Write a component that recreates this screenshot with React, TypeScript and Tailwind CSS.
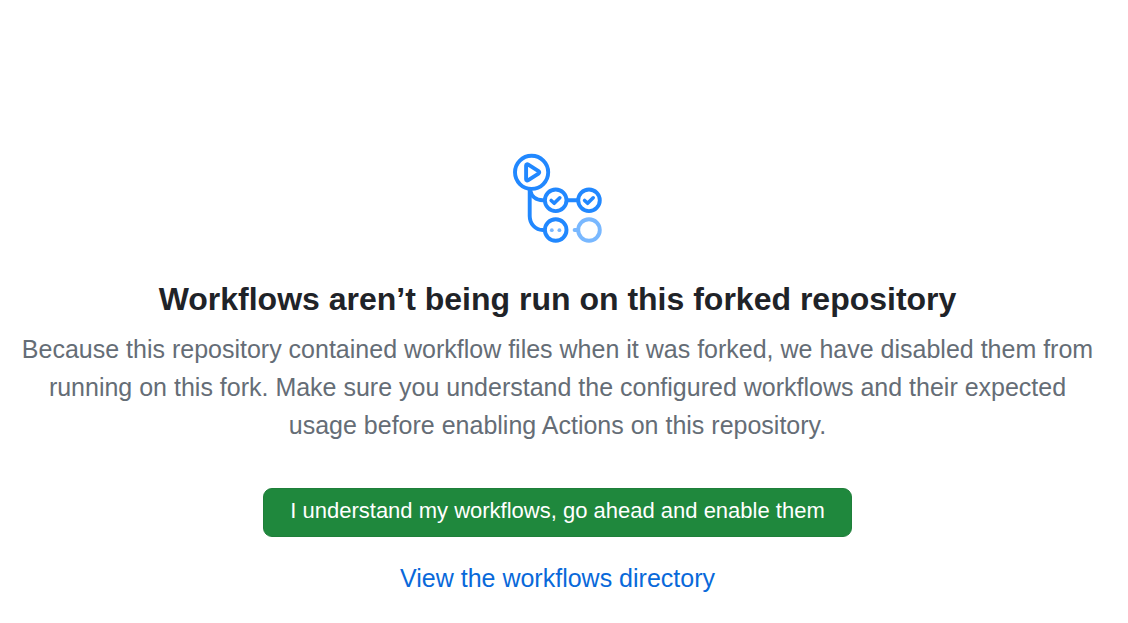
function WorkflowIcon() {
  return (
    <svg
      className="size-[92px]"
      viewBox="0 0 92 92"
      fill="none"
      stroke="#2188ff"
      strokeWidth="3.9"
      strokeLinecap="round"
      strokeLinejoin="round"
      aria-hidden="true"
    >
      <circle cx="19.6" cy="19.3" r="16.6" />
      <path d="M14.1 12.4v13.8c0 1.4 1.2 1.6 2.2 1l10.2-6.6c1-.7 1-1.8 0-2.5l-10.2-6.5c-1-.6-2.2-.4-2.2.8Z" />
      <path d="M17.7 37v26c0 8 6 14 13 14" />
      <path d="M18.2 37.5c1.2 5.8 5.8 9.8 12.5 9.8" />
      <path d="M56 47.3h9" />
      <circle cx="43.7" cy="47.3" r="10.8" />
      <circle cx="77" cy="47.3" r="10.8" />
      <circle cx="43.7" cy="77" r="10.8" />
      <path
        strokeWidth="3.6"
        d="m39.2 47.5 3 2.8 5.6-5.5M72.6 47.5l3 2.8 5.6-5.5"
      />
      <g stroke="#79b8ff">
        <circle cx="77" cy="77" r="10.8" />
        <path d="M62.6 77h2.4" />
      </g>
      <g fill="#79b8ff" stroke="none">
        <circle cx="39.8" cy="77.2" r="1.9" />
        <circle cx="47.4" cy="77.2" r="1.9" />
      </g>
    </svg>
  );
}

export default function App() {
  return (
    <main className="flex min-h-screen flex-col items-center bg-white pt-[153px] pr-[13px] pb-6 text-center font-['Liberation_Sans',sans-serif] text-[25px] leading-[38px]">
      <WorkflowIcon />
      <h1 className="mt-[30px] text-[32px] leading-[48px] font-bold text-[#1f2328]">
        Workflows aren’t being run on this forked repository
      </h1>
      <p className="mt-[7px] max-w-[1084px] text-[#656d76]">
        Because this repository contained workflow files when it was forked, we have disabled them from
        running on this fork. Make sure you understand the configured workflows and their expected usage
        before enabling Actions on this repository.
      </p>
      <button
        type="button"
        className="mt-11 h-[49px] rounded-[9px] border border-[#1f7f3a] bg-[#1f883d] px-[26px] pb-1 text-[22px] leading-8 text-white"
      >
        I understand my workflows, go ahead and enable them
      </button>
      <a href="#workflows" className="mt-[22px] text-[#0969da]">
        View the workflows directory
      </a>
    </main>
  );
}
